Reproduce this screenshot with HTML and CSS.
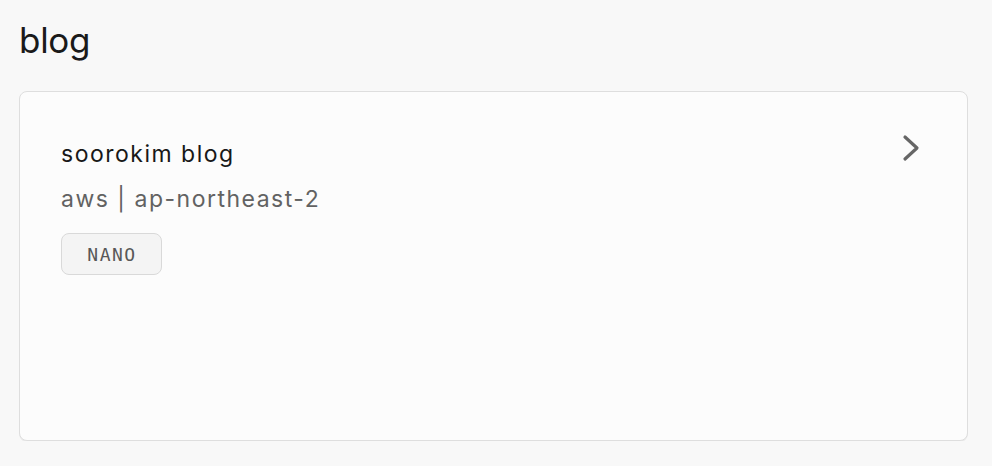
FILE: index.html
```html
<!DOCTYPE html>
<html>
<head>
<meta charset="utf-8">
<link rel="stylesheet" href="styles.css">
</head>
<body>
<main class="page">
  <h1 class="section-title">blog</h1>
  <a class="project-card" href="#">
    <div class="card-body">
      <div class="card-info">
        <div class="project-name">soorokim blog</div>
        <div class="project-region">aws | ap-northeast-2</div>
        <div class="tags"><span class="tag">NANO</span></div>
      </div>
      <svg class="chevron" width="18" height="28" viewBox="0 0 18 28" fill="none" stroke="currentColor" stroke-width="3.2" stroke-linecap="round" stroke-linejoin="round"><polyline points="3 3 15 14 3 25"></polyline></svg>
    </div>
  </a>
</main>
</body>
</html>
```

FILE: styles.css
```css
* { box-sizing: border-box; }
html, body { margin: 0; padding: 0; }
body {
  background: #f8f8f8;
  font-family: Inter, "Noto Sans", sans-serif;
  color: #1c1c1c;
}
.page {
  padding: 18px 25px 0 19px;
}
.section-title {
  margin: 0 0 29px;
  font-size: 35px;
  font-weight: 400;
  line-height: 44px;
  letter-spacing: -0.3px;
  color: #1a1a1a;
}
.project-card {
  display: block;
  height: 350px;
  width: 949px;
  background: #fcfcfc;
  border: 1px solid #dedede;
  border-radius: 8px;
  box-shadow: 0 1px 0 rgba(0,0,0,0.05);
  text-decoration: none;
  color: inherit;
}
.card-body {
  display: flex;
  justify-content: space-between;
  align-items: flex-start;
  padding: 42px 47px 0 41px;
}
.card-info {
  display: flex;
  flex-direction: column;
  margin-top: 6px;
}
.project-name {
  font-size: 23px;
  line-height: 28px;
  color: #181818;
  letter-spacing: 1.5px;
}
.project-region {
  margin-top: 17px;
  font-size: 23px;
  line-height: 28px;
  color: #626262;
  letter-spacing: 1.5px;
}
.tags {
  margin-top: 20px;
  display: flex;
}
.tag {
  display: inline-flex;
  align-items: center;
  justify-content: center;
  width: 101px;
  height: 42px;
  background: #f4f4f4;
  border: 1.5px solid #d9d9d9;
  border-radius: 8px;
  font-family: "DejaVu Sans Mono", "Liberation Mono", monospace;
  font-size: 18px;
  color: #585858;
  letter-spacing: 1.5px;
  padding-left: 1px;
}
.chevron {
  color: #666;
  flex-shrink: 0;
}
```
